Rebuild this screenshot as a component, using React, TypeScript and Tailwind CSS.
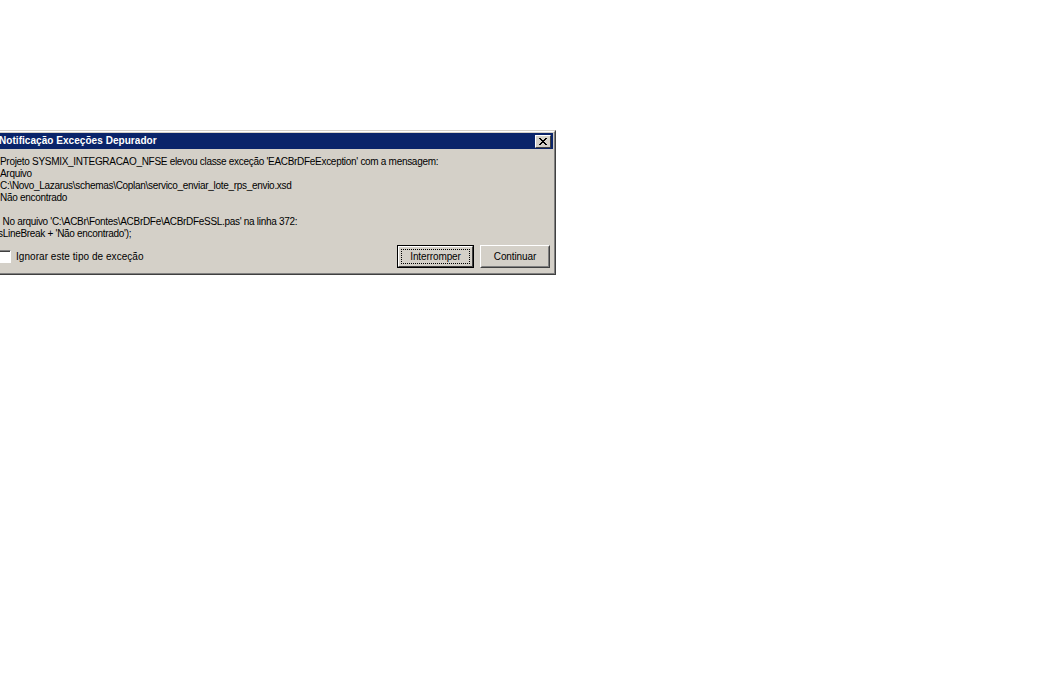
import React from "react";

function CloseGlyph() {
  return (
    <svg width="8" height="7" viewBox="0 0 8 7" shapeRendering="crispEdges">
      <path d="M0 0h2v1H0zM6 0h2v1H6zM1 1h2v1H1zM5 1h2v1H5zM2 2h4v1H2zM3 3h2v1H3zM2 4h4v1H2zM1 5h2v1H1zM5 5h2v1H5zM0 6h2v1H0zM6 6h2v1H6z" fill="#000" />
    </svg>
  );
}

export default function App() {
  const font = { fontFamily: '"Liberation Sans", Arial, sans-serif' };
  return (
    <div className="w-[1038px] h-[700px] bg-white overflow-hidden relative" style={font}>
      <div className="ml-[-7px] mt-[130px] w-[563px] bg-[#d4d0c8] border border-t-[#d4d0c8] border-l-[#d4d0c8] border-r-[#404040] border-b-[#404040]">
        <div className="border border-t-white border-l-white border-r-[#808080] border-b-[#808080] p-px">
          {/* Title bar */}
          <div className="h-[16px] bg-[#0a246a] flex items-center justify-between pl-[3px] pr-[2px]">
            <span className="text-white font-bold text-[10px] leading-none tracking-[0.05px]">
              Notificação Exceções Depurador
            </span>
            <div className="w-[16px] h-[13px] bg-[#d4d0c8] border border-t-white border-l-white border-r-[#404040] border-b-[#404040] flex items-center justify-center">
              <CloseGlyph />
            </div>
          </div>
          {/* Body */}
          <div className="pl-[4px] pr-[3px] pt-[7px] pb-[4px]">
            <div className="text-[10px] leading-[12px] tracking-[-0.3px] text-black whitespace-pre">
              <div>Projeto SYSMIX_INTEGRACAO_NFSE elevou classe exceção 'EACBrDFeException' com a mensagem:</div>
              <div>Arquivo</div>
              <div>C:\Novo_Lazarus\schemas\Coplan\servico_enviar_lote_rps_envio.xsd</div>
              <div>Não encontrado</div>
              <div>&nbsp;</div>
              <div> No arquivo 'C:\ACBr\Fontes\ACBrDFe\ACBrDFeSSL.pas' na linha 372:</div>
              <div className="ml-[-10px]">+ sLineBreak + 'Não encontrado');</div>
            </div>
            <div className="mt-[5px] flex items-center justify-between">
              <label className="flex items-center gap-[5px] text-[10px] tracking-[0.05px] text-black ml-[-2px]">
                <span className="w-[13px] h-[13px] bg-white border border-t-[#808080] border-l-[#808080] border-r-white border-b-white inline-block shadow-[inset_1px_1px_0_#404040]" />
                <span>Ignorar este tipo de exceção</span>
              </label>
              <div className="flex items-center gap-[6px]">
                <div className="w-[77px] h-[23px] border border-black bg-[#d4d0c8]">
                  <div className="w-full h-full border border-t-white border-l-white border-r-[#404040] border-b-[#404040] p-[2px]">
                    <div className="w-full h-full border border-dotted border-black flex items-center justify-center text-[10px] tracking-[-0.1px] text-black">
                      Interromper
                    </div>
                  </div>
                </div>
                <div className="w-[70px] h-[23px] bg-[#d4d0c8] border border-t-white border-l-white border-r-[#404040] border-b-[#404040]">
                  <div className="w-full h-full border border-t-[#d4d0c8] border-l-[#d4d0c8] border-r-[#808080] border-b-[#808080] flex items-center justify-center text-[10px] tracking-[-0.1px] text-black">
                    Continuar
                  </div>
                </div>
              </div>
            </div>
          </div>
        </div>
      </div>
    </div>
  );
}
